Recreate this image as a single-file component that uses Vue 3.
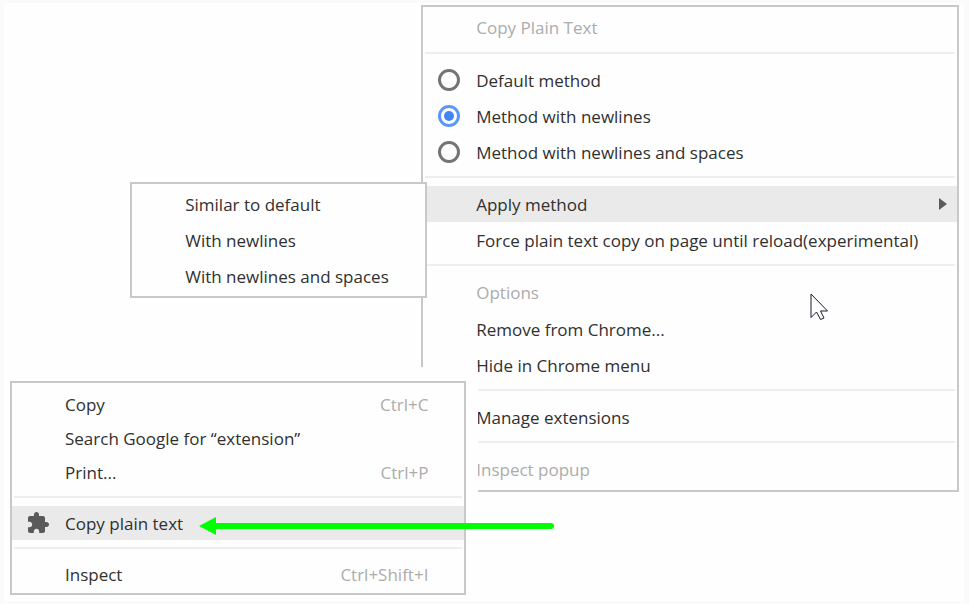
<script setup>
import { ref } from 'vue';

const methods = [
  { id: 'default', label: 'Default method' },
  { id: 'newlines', label: 'Method with newlines' },
  { id: 'spaces', label: 'Method with newlines and spaces' },
];
const method = ref('newlines');

const applyItems = ['Similar to default', 'With newlines', 'With newlines and spaces'];

const editItems = [
  { label: 'Copy', keys: 'Ctrl+C' },
  { label: 'Search Google for “extension”', keys: '' },
  { label: 'Print...', keys: 'Ctrl+P' },
];
</script>

<template>
  <main class="board">
    <div class="menu extension-menu">
      <button class="item" disabled>Copy Plain Text</button>
      <hr />
      <label v-for="m in methods" :key="m.id" class="item">
        <input type="radio" name="method" :value="m.id" v-model="method" />
        <span>{{ m.label }}</span>
      </label>
      <hr />
      <div class="parent">
        <button class="item active">
          <span>Apply method</span>
          <svg class="caret" width="8" height="12" viewBox="0 0 8 12">
            <path d="M0 0L8 6L0 12Z" fill="#5a5a5a" />
          </svg>
        </button>
        <div class="menu submenu">
          <button v-for="label in applyItems" :key="label" class="item">{{ label }}</button>
        </div>
      </div>
      <button class="item">Force plain text copy on page until reload(experimental)</button>
      <hr />
      <button class="item" disabled>Options</button>
      <button class="item">Remove from Chrome...</button>
      <button class="item">Hide in Chrome menu</button>
      <hr />
      <button class="item">Manage extensions</button>
      <hr />
      <button class="item" disabled>Inspect popup</button>

      <svg class="pointer" width="19" height="28" viewBox="0 0 19 28">
        <path
          d="M1 1V24.500L6.500 19L10.500 26.500L14 25L10.500 18H17.500Z"
          fill="#fff"
          stroke="#1a1a2a"
          stroke-width="1"
        />
      </svg>
    </div>

    <div class="page-menu-area">
      <div class="menu page-menu">
        <button v-for="item in editItems" :key="item.label" class="item">
          <span>{{ item.label }}</span>
          <kbd v-if="item.keys">{{ item.keys }}</kbd>
        </button>
        <hr />
        <button class="item active">
          <svg class="puzzle" width="24" height="24" viewBox="0 0 24 24">
            <path
              d="M20.500 11H19V7c0-1.100-.9-2-2-2h-4V3.500C13 2.120 11.880 1 10.500 1S8 2.120 8 3.500V5H4c-1.100 0-1.990.9-1.990 2v3.800H3.500c1.490 0 2.700 1.210 2.700 2.700s-1.210 2.700-2.700 2.700H2V20c0 1.100.9 2 2 2h3.800v-1.500c0-1.490 1.210-2.700 2.700-2.700 1.490 0 2.700 1.210 2.700 2.700V22H17c1.100 0 2-.9 2-2v-4h1.500c1.380 0 2.500-1.120 2.500-2.500S21.880 11 20.500 11z"
              fill="#5a5a5a"
            />
          </svg>
          <span>Copy plain text</span>
        </button>
        <hr />
        <button class="item">
          <span>Inspect</span>
          <kbd>Ctrl+Shift+I</kbd>
        </button>
      </div>
    </div>

    <svg class="arrow" width="356" height="20" viewBox="0 0 356 20">
      <path d="M14 10H352" stroke="#00ff00" stroke-width="6" stroke-linecap="round" />
      <path d="M0 10L17 1V19Z" fill="#00ff00" />
    </svg>
  </main>
</template>

<style>
body {
  background: #fafafa;
}
</style>

<style scoped>
.board {
  position: relative;
  margin: 3px 5px 3px 4px;
  padding: 2px 5px 109px 0;
  background: #fefefe;
  font-family: "Open Sans", "Noto Sans", sans-serif;
  font-size: 17px;
}

.menu {
  box-sizing: border-box;
  border: 2px solid #c8c8c8;
  background: #fefefe;
}

.extension-menu {
  position: relative;
  width: calc(56% + 3px);
  margin-left: auto;
  padding: 2px 0;
}

.item {
  display: flex;
  align-items: center;
  position: relative;
  box-sizing: border-box;
  width: 100%;
  height: 36px;
  margin: 0;
  padding: 0 36px 0 53px;
  border: 0;
  background: none;
  color: #303030;
  font: inherit;
  text-align: left;
  white-space: nowrap;
}

.item:disabled {
  height: 37px;
  color: #acacac;
}

.item.active {
  background: #eaeaea;
}

hr {
  height: 2px;
  margin: 6px 2px 8px;
  border: 0;
  background: #eeeeee;
}

input {
  appearance: none;
  display: grid;
  place-items: center;
  position: absolute;
  left: 15px;
  width: 22px;
  height: 22px;
  margin: 0;
  border: 3px solid #747474;
  border-radius: 50%;
}

input:checked {
  border-color: #5b96f8;
}

input:checked::before {
  content: "";
  width: 10px;
  height: 10px;
  border-radius: 50%;
  background: #4285f4;
}

.parent {
  position: relative;
}

.caret {
  position: absolute;
  right: 10px;
}

.submenu {
  position: absolute;
  top: -4px;
  right: calc(100% - 4px);
  width: 297px;
  padding: 2px 0;
}

.pointer {
  position: absolute;
  top: 286px;
  right: 128px;
}

/* plain backdrop that keeps the page menu clear of the one behind it */
.page-menu-area {
  position: absolute;
  bottom: 0;
  left: 0;
  width: calc(49% + 4px);
  box-sizing: border-box;
  padding: 14px 12px 6px 6px;
  background: #fefefe;
}

.page-menu {
  padding: 4px 0 2px;
}

.page-menu .item {
  height: 34px;
}

.page-menu hr {
  margin: 7px 2px 8px;
}

.puzzle {
  position: absolute;
  left: 14px;
}

kbd {
  margin-left: auto;
  color: #acacac;
  font: inherit;
}

.arrow {
  position: absolute;
  bottom: 65px;
  left: 195px;
}
</style>
